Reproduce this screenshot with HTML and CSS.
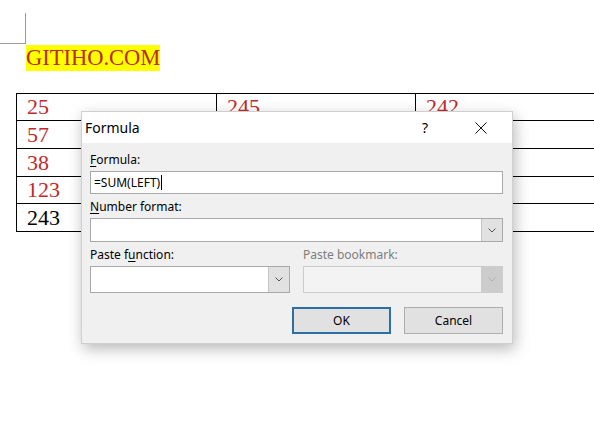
FILE: index.html
```html
<!DOCTYPE html>
<html>
<head>
<meta charset="utf-8">
<link rel="stylesheet" href="styles.css">
</head>
<body>
<div class="page">
  <div class="corner"></div>
  <p class="brand"><span class="hl">GITIHO.COM</span></p>
  <table class="doc-table">
    <tr class="r1"><td class="red">25</td><td class="red">245</td><td class="red">242</td></tr>
    <tr class="r2"><td class="red">57</td><td></td><td></td></tr>
    <tr class="r3"><td class="red">38</td><td></td><td></td></tr>
    <tr class="r4"><td class="red">123</td><td></td><td></td></tr>
    <tr class="r5"><td>243</td><td></td><td></td></tr>
  </table>

  <div class="dialog">
    <div class="titlebar">
      <span class="title">Formula</span>
      <span class="help">?</span>
      <span class="close">
        <svg width="12" height="12" viewBox="0 0 12 12"><path d="M0.5 0.5 L11.5 11.5 M11.5 0.5 L0.5 11.5" stroke="#111" stroke-width="1" fill="none"/></svg>
      </span>
    </div>
    <div class="body">
      <div class="label"><u>F</u>ormula:</div>
      <div class="textbox">=SUM(LEFT)<span class="caret"></span></div>

      <div class="label gap"><u>N</u>umber format:</div>
      <div class="combo wide">
        <div class="field"></div>
        <div class="drop"><svg width="8" height="5" viewBox="0 0 8 5"><polyline points="0.5,0.5 4,4 7.5,0.5" fill="none" stroke="#555" stroke-width="1"/></svg></div>
      </div>

      <div class="pair">
        <div class="col">
          <div class="label">Paste f<u>u</u>nction:</div>
          <div class="combo tall">
            <div class="field"></div>
            <div class="drop"><svg width="8" height="5" viewBox="0 0 8 5"><polyline points="0.5,0.5 4,4 7.5,0.5" fill="none" stroke="#555" stroke-width="1"/></svg></div>
          </div>
        </div>
        <div class="col">
          <div class="label disabled">Paste bookmark:</div>
          <div class="combo tall off">
            <div class="field"></div>
            <div class="drop"><svg width="8" height="5" viewBox="0 0 8 5"><polyline points="0.5,0.5 4,4 7.5,0.5" fill="none" stroke="#b0b0b0" stroke-width="1"/></svg></div>
          </div>
        </div>
      </div>

      <div class="buttons">
        <button class="btn primary">OK</button>
        <button class="btn">Cancel</button>
      </div>
    </div>
  </div>
</div>
</body>
</html>
```

FILE: styles.css
```css
html, body {
  margin: 0;
  padding: 0;
  background: #ffffff;
}
body {
  width: 594px;
  height: 426px;
  overflow: hidden;
}
.page {
  position: relative;
  width: 594px;
  height: 426px;
  overflow: hidden;
}
.corner {
  width: 25px;
  height: 30px;
  margin-top: 13px;
  border-right: 1px solid #9a9a9a;
  border-bottom: 1px solid #9a9a9a;
}
.brand {
  margin: 1px 0 0 26px;
  height: 26px;
  font-family: "Liberation Serif", "Times New Roman", serif;
  font-size: 22.5px;
  line-height: 26px;
}
.hl {
  display: inline-block;
  background: #ffff00;
  color: #bb2a22;
  height: 26px;
}
.doc-table {
  margin: 22px 0 0 16px;
  border-collapse: collapse;
  width: 620px;
  table-layout: fixed;
  font-family: "Liberation Serif", "Times New Roman", serif;
  font-size: 22px;
  color: #000;
}
.doc-table td {
  border: 1px solid #000;
  padding: 0 0 0 10px;
  line-height: 20px;
  vertical-align: middle;
}
.doc-table td:nth-child(1) { width: 189px; }
.doc-table td:nth-child(2) { width: 188px; }
.doc-table .r1 td { height: 26px; }
.doc-table .r2 td { height: 27px; }
.doc-table .r3 td { height: 27px; }
.doc-table .r4 td { height: 26px; }
.doc-table .r5 td { height: 27px; }
.doc-table .red { color: #bf2a2c; }

.dialog {
  position: absolute;
  left: 81px;
  top: 111px;
  width: 430px;
  border: 1px solid #cfcfcf;
  background: #f0f0f0;
  box-shadow: 2px 5px 14px rgba(0, 0, 0, 0.28);
  font-family: "Noto Sans", "Open Sans", sans-serif;
  font-size: 12px;
  color: #000;
}
.titlebar {
  height: 31px;
  background: #ffffff;
  display: flex;
  align-items: center;
  padding: 0 16px 0 3px;
}
.title {
  font-size: 14px;
  flex: 1;
}
.help {
  width: 30px;
  text-align: center;
  font-size: 14px;
  margin-right: 26px;
}
.close {
  width: 30px;
  display: flex;
  justify-content: center;
  align-items: center;
}
.close svg { display: block; }
.body {
  padding: 8px 9px 9px 8px;
}
.label {
  line-height: 16px;
  height: 16px;
  padding-top: 1px;
  margin-bottom: 3px;
  white-space: nowrap;
}
.label u { text-decoration-thickness: 1px; text-underline-offset: 2px; }
.label.gap { margin-top: 4px; }
.label.disabled { color: #7d7d7d; }
.textbox {
  box-sizing: border-box;
  height: 23px;
  margin-top: 1px;
  border: 1px solid #a9a9a9;
  background: #fff;
  line-height: 20px;
  padding: 0 3px;
  display: flex;
  align-items: center;
}
.caret {
  display: inline-block;
  width: 1px;
  height: 15px;
  background: #000;
  margin-left: 1px;
}
.combo {
  box-sizing: border-box;
  display: flex;
  border: 1px solid #a9a9a9;
  background: #fff;
}
.combo.wide { height: 24px; }
.combo.tall { height: 27px; }
.combo .field { flex: 1; }
.combo .drop {
  width: 20px;
  background: #e1e1e1;
  border-left: 1px solid #c4c4c4;
  display: flex;
  align-items: center;
  justify-content: center;
}
.combo.off {
  background: #f3f3f3;
  border-color: #cccccc;
}
.combo.off .drop {
  background: #cccccc;
  border-left-color: #cccccc;
}
.pair {
  display: grid;
  grid-template-columns: 200px 200px;
  column-gap: 13px;
  margin-top: 4px;
}
.buttons {
  display: flex;
  justify-content: flex-end;
  gap: 13px;
  margin-top: 14px;
}
.btn {
  box-sizing: border-box;
  width: 99px;
  height: 27px;
  margin: 0;
  padding: 0;
  background: #e1e1e1;
  border: 1px solid #adadad;
  font-family: "Noto Sans", "Open Sans", sans-serif;
  font-size: 12px;
  color: #000;
}
.btn.primary {
  border: 2px solid #2b6fa4;
}
```
